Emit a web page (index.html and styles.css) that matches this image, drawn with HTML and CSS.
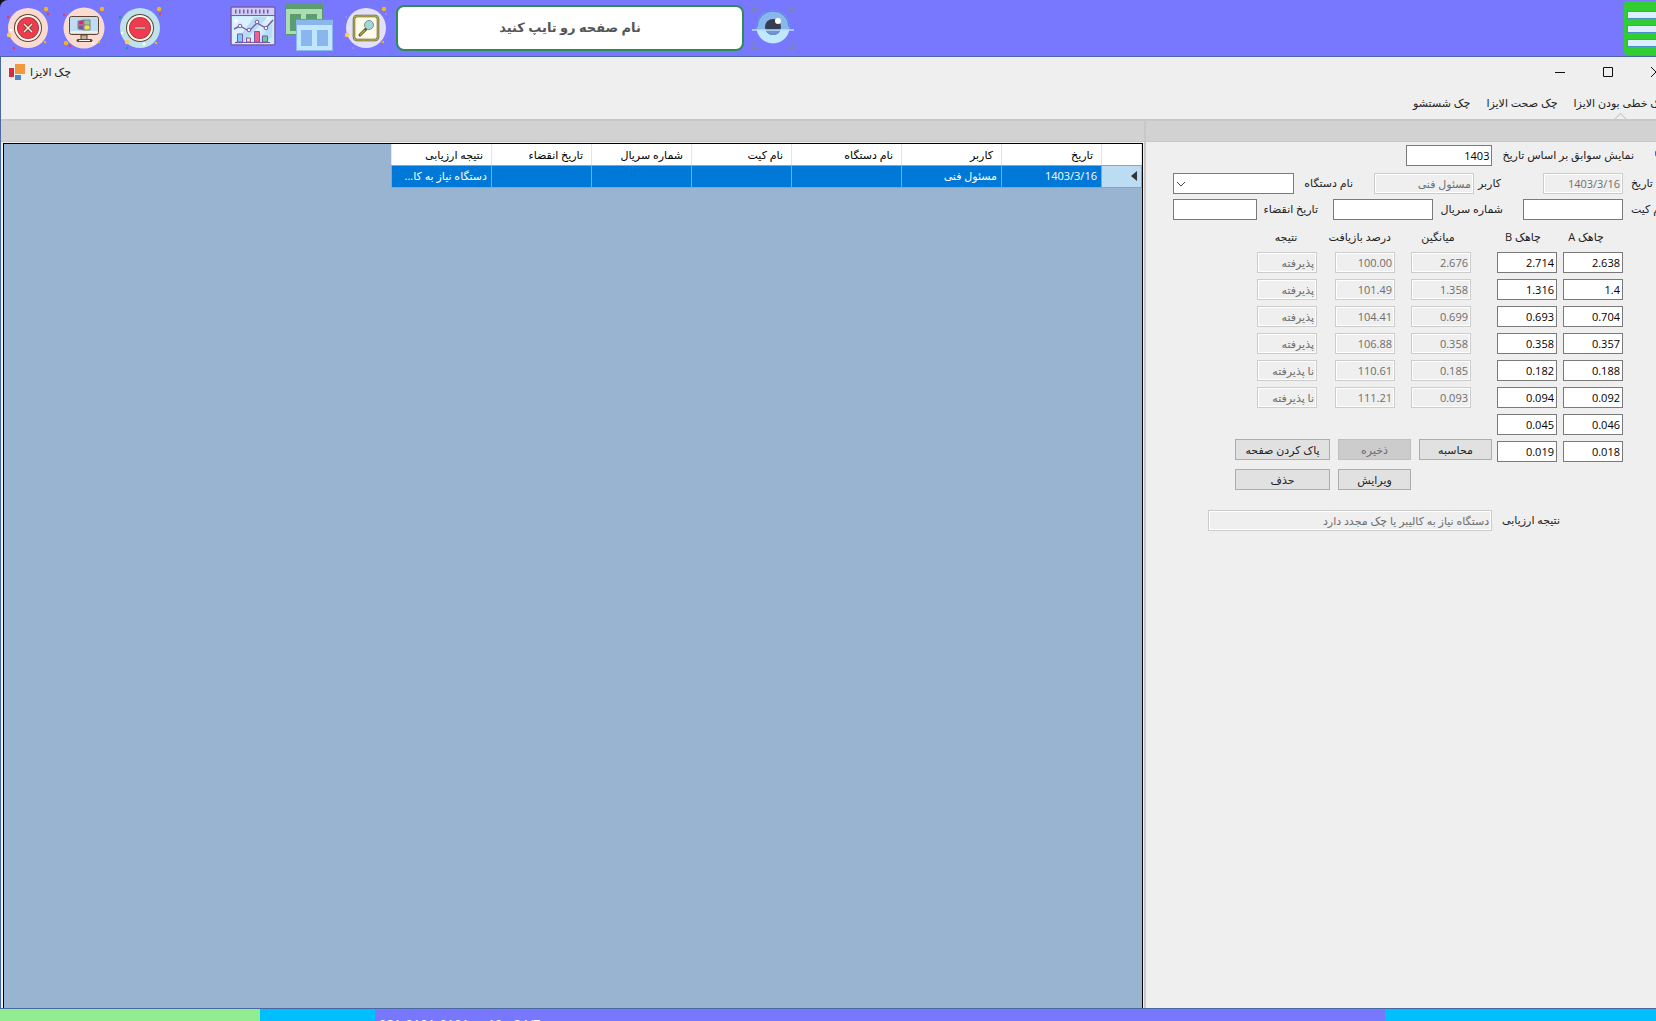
FILE: index.html
```html
<!DOCTYPE html>
<html lang="fa">
<head>
<meta charset="utf-8">
<title>چک الایزا</title>
<link rel="stylesheet" href="styles.css">
</head>
<body>
<div class="shell">
  <header class="topbar">
    <nav class="tools">
      <button class="tool" aria-label="خروج">
        <svg viewBox="0 0 44 44" width="44" height="44"><circle cx="22" cy="22" r="20" fill="#fadbd2"/><circle cx="22" cy="22" r="14" fill="#5c4334"/><circle cx="22" cy="22" r="13" fill="#fff7ea"/><circle cx="22" cy="22" r="11" fill="#8a3a40"/><circle cx="22" cy="22" r="10.400" fill="#f03a50"/><path d="M18 18l8 8M26 18l-8 8" stroke="#5c4334" stroke-width="3"/><path d="M18 18l8 8M26 18l-8 8" stroke="#fff0dc" stroke-width="1.500"/><circle cx="40" cy="3" r="2.200" fill="#f5b417"/><circle cx="3" cy="29" r="2.200" fill="#ffca4e"/><circle cx="39" cy="36" r="1.200" fill="#f5b417"/><circle cx="42" cy="8" r="1.200" fill="#f03a50"/><circle cx="2" cy="11" r="1.200" fill="#f03a50"/><circle cx="8" cy="42" r="1.200" fill="#f03a50"/><circle cx="5" cy="24" r="1.300" fill="#fff"/></svg>
      </button>
      <button class="tool" aria-label="دسکتاپ">
        <svg viewBox="0 0 44 44" width="44" height="44"><circle cx="22" cy="22" r="20.500" fill="#fadbd2"/><rect x="7.500" y="10.500" width="29" height="18" rx="2" fill="#bfdcf3" stroke="#5c4334"/><path d="M8 26h28" stroke="#fff7ea" stroke-width="1.500"/><path d="M19 29h6v5h-6z" fill="#bfb49f" stroke="#5c4334"/><path d="M16 34.500h13" stroke="#5c4334" stroke-width="3" stroke-linecap="round"/><path d="M17 34.500h11" stroke="#fff7ea"/><path d="M16.500 15.500l5-1v4h-5z" fill="#e4217e"/><path d="M22.500 14.500h5v4h-5z" fill="#8dc987"/><path d="M16.500 19.500h5v4l-5-1z" fill="#7554a3"/><path d="M22.500 19.500h5v4h-5z" fill="#efe345"/><path d="M16 15l6-1h6v10h-6l-6-1zM22 14v10M16 19h12" fill="none" stroke="#5c4334" stroke-width=".6"/><circle cx="40" cy="3" r="2.200" fill="#f5b417"/><circle cx="4" cy="37" r="2.200" fill="#f5b417"/><circle cx="2" cy="9" r="1.200" fill="#f03a50"/><circle cx="8" cy="40" r="1.200" fill="#f03a50"/><circle cx="31" cy="37" r="1.600" fill="#fff"/><circle cx="37" cy="36" r="1.200" fill="#f5b417"/></svg>
      </button>
      <button class="tool" aria-label="کوچک کردن">
        <svg viewBox="0 0 44 44" width="44" height="44"><circle cx="22" cy="22" r="20" fill="#bfe3e8"/><circle cx="22" cy="22" r="14" fill="#5c4334"/><circle cx="22" cy="22" r="13" fill="#fff7ea"/><circle cx="22" cy="22" r="11" fill="#8a3a40"/><circle cx="22" cy="22" r="10.400" fill="#f03a50"/><path d="M17 22h10" stroke="#8a5a4a" stroke-width="2.500"/><path d="M17 22h10" stroke="#cbbfa8" stroke-width="1.500"/><circle cx="41" cy="3" r="2.200" fill="#f5b417"/><circle cx="9" cy="36" r="2.200" fill="#ffca4e"/><circle cx="38" cy="37" r="1.200" fill="#f5b417"/><circle cx="42" cy="8" r="1.200" fill="#f03a50"/><circle cx="2" cy="11" r="1.200" fill="#0ea08c"/><circle cx="9" cy="42" r="1.200" fill="#0ea08c"/><circle cx="26" cy="38" r="1.600" fill="#fff"/><circle cx="4" cy="27" r="1.300" fill="#fff"/></svg>
      </button>
    </nav>
    <nav class="pages">
      <button class="tool" aria-label="نمودار">
        <svg viewBox="0 0 46 44" width="46" height="44"><rect x="1" y="1" width="44" height="38" rx="1.500" fill="#cbe9fb" stroke="#7a5aa6" stroke-width="1.500"/><path d="M2 11h42L20 38H2z" fill="#d9f0ff"/><path d="M24 11h14L12 38H4zM42 17v14l-8 7h-8z" fill="#b7dcf5"/><rect x="2" y="2" width="42" height="7" fill="#cfcdf5"/><path d="M5 5.500h36" stroke="#7a5aa6" stroke-width="4" stroke-dasharray="1.500 2.500"/><path d="M1 9.500h44M5 36.500h35" stroke="#7a5aa6"/><path d="M4 23l6-3 9 5 8-8 9 5 7-8" fill="none" stroke="#7a5aa6" stroke-width="1.400"/><g fill="#eef7ff" stroke="#7a5aa6"><circle cx="10" cy="20" r="1.800"/><circle cx="19" cy="24" r="1.800"/><circle cx="27" cy="16" r="1.800"/><circle cx="36" cy="22" r="1.800"/></g><g stroke="#7a5aa6"><path d="M7.500 36v-8h5v8z" fill="#7fc8fa"/><path d="M16.500 36v-4h4v4z" fill="#ffe28b"/><path d="M24.500 36V25.500h5V36z" fill="#f26091"/><path d="M32.500 36v-6h5v6z" fill="#69c9a4"/></g><path d="M6 12l.8 2.200 2.200.8-2.200.8L6 18l-.8-2.200L3 15l2.200-.8zM38 10l.5 2 2 .5-2 .5-.5 2-.5-2-2-.5 2-.5z" fill="#fff"/></svg>
      </button>
      <button class="tool" aria-label="پنجره‌ها">
        <svg viewBox="1 0 48 50" width="48" height="50"><path d="M.5.500h37v31H.500z" fill="#acdcb0" stroke="#4f9c6c"/><path d="M0 0h38v6H0z" fill="#5b9d70"/><path d="M5 11h11v17H5zM21 11h11v17H21z" fill="#5b9d70"/><path d="M11.500 16.500h36v31h-36z" fill="#c1e6ff" stroke="#8ab6ee"/><path d="M11 16h37v6H11z" fill="#8ab6ee"/><path d="M11 16h37v1H11z" fill="#6a93d8"/><path d="M16 27h11v16H16zM32 27h11v16H32z" fill="#8ab6ee"/></svg>
      </button>
      <button class="tool" aria-label="جستجو">
        <svg viewBox="0 0 44 44" width="44" height="44"><circle cx="22" cy="22" r="20" fill="#e2e1f7"/><rect x="10" y="10" width="24" height="24" rx="3" fill="#fffbea" stroke="#53502e" stroke-width="2.500"/><rect x="10" y="10" width="24" height="24" rx="3" fill="none" stroke="#b3ae4f" stroke-width="1.400"/><path d="M16 29l6-6" stroke="#53502e" stroke-width="3" stroke-linecap="round"/><path d="M16 29l5-5" stroke="#b3ae4f" stroke-width="1.500"/><circle cx="25" cy="19" r="4.500" fill="#9fd8dc" stroke="#7e908c"/><circle cx="40" cy="3" r="2.200" fill="#f5b417"/><circle cx="3" cy="29" r="2.200" fill="#ffca4e"/><circle cx="39" cy="36" r="1.200" fill="#f5b417"/><circle cx="42" cy="8" r="1" fill="#9a96d8"/><circle cx="2" cy="11" r="1" fill="#9a96d8"/><circle cx="9" cy="42" r="1" fill="#9a96d8"/></svg>
      </button>
    </nav>
    <input class="page-search" dir="rtl" type="text" aria-label="نام صفحه" placeholder="نام صفحه رو تایپ کنید">
    <button class="tool" aria-label="نمایش">
      <svg viewBox="0 0 42 42" width="42" height="42"><path d="M1 7V1h6M35 1h6v6M41 35v6h-6M7 41H1v-6" fill="none" stroke="#7885b8" stroke-width="2"/><circle cx="21" cy="20" r="16.500" fill="#8ab6ee"/><path d="M4.800 23A16.500 16.500 0 0 0 37.200 23z" fill="#c1e8ff"/><path d="M5 20a16 16 0 0 1 32 0" fill="none" stroke="#4f83c6"/><circle cx="21" cy="20" r="8" fill="#343e50"/><path d="M13.600 23a8 8 0 0 0 14.800 0z" fill="#6f93cf"/><circle cx="26" cy="14" r="3" fill="#fff"/><path d="M0 23h42" stroke="#b9e2ff" stroke-width="1.500"/></svg>
    </button>
    <button class="menu-button" aria-label="منو"><span></span><span></span><span></span></button>
  </header>

  <main class="window">
    <div class="titlebar">
      <svg viewBox="0 0 16 16" width="16" height="16"><path d="M6 0h10v10H6z" fill="#f2993f"/><path d="M0 4h5v9H0z" fill="#d03040"/><path d="M6 11h6v5H6z" fill="#4a88c8"/></svg>
      <h1 dir="rtl">چک الایزا</h1>
      <div class="caption">
        <button aria-label="کمینه"><svg viewBox="0 0 10 10" width="10" height="10"><path d="M0 5.500h10" stroke="#111"/></svg></button>
        <button aria-label="بیشینه"><svg viewBox="0 0 10 10" width="10" height="10"><path d="M.5.500h9v9h-9z" fill="none" stroke="#111"/></svg></button>
        <button aria-label="بستن"><svg viewBox="0 0 10 10" width="10" height="10"><path d="M0 0l10 10M10 0L0 10" stroke="#111"/></svg></button>
      </div>
    </div>
    <nav class="tabs" dir="rtl">
      <a class="current" href="#linear">چک خطی بودن الایزا</a>
      <a href="#accuracy">چک صحت الایزا</a>
      <a href="#wash">چک شستشو</a>
    </nav>
    <div class="split">
      <section class="records">
        <div class="band"></div>
        <div class="grid" dir="rtl">
          <table>
            <colgroup><col class="c-mark"><col class="c-std"><col class="c-std"><col class="c-device"><col class="c-std"><col class="c-std"><col class="c-std"><col class="c-std"></colgroup>
            <thead><tr><th></th><th>تاریخ</th><th>کاربر</th><th>نام دستگاه</th><th>نام کیت</th><th>شماره سریال</th><th>تاریخ انقضاء</th><th>نتیجه ارزیابی</th></tr></thead>
            <tbody><tr><th><svg viewBox="0 0 6 10" width="6" height="10"><path d="M6 0v10L0 5z" fill="#333"/></svg></th><td>1403/3/16</td><td>مسئول فنی</td><td></td><td></td><td></td><td></td><td>دستگاه نیاز به کا...</td></tr></tbody>
          </table>
        </div>
      </section>
      <section class="entry">
        <div class="band"></div>
        <form class="form" dir="rtl">
          <div class="line history">
            <input class="by-date" type="radio" aria-label="بر اساس تاریخ">
            <label for="year">نمایش سوابق بر اساس تاریخ</label>
            <input class="w-year" id="year" type="text" value="1403">
          </div>
          <div class="line">
            <label class="l-first" for="date">تاریخ</label>
            <input class="w-date" id="date" type="text" value="1403/3/16" disabled>
            <label class="l-user" for="user">کاربر</label>
            <input class="w-mid" id="user" type="text" value="مسئول فنی" disabled>
            <label class="l-device" for="device">نام دستگاه</label>
            <span class="select"><select id="device"><option></option></select><svg viewBox="0 0 10 6" width="10" height="6"><path d="M1 1l4 4 4-4" fill="none" stroke="#444"/></svg></span>
          </div>
          <div class="line">
            <label class="l-first" for="kit">نام کیت</label>
            <input class="w-mid" id="kit" type="text">
            <label class="l-serial" for="serial">شماره سریال</label>
            <input class="w-mid" id="serial" type="text">
            <label class="l-expiry" for="expiry">تاریخ انقضاء</label>
            <input class="w-expiry" id="expiry" type="text">
          </div>
          <div class="measure">
            <table class="wells">
              <thead><tr><th>چاهک A</th><th>چاهک B</th></tr></thead>
              <tbody>
                <tr><td><input aria-label="چاهک A 1" value="2.638"></td><td><input aria-label="چاهک B 1" value="2.714"></td></tr>
                <tr><td><input aria-label="چاهک A 2" value="1.4"></td><td><input aria-label="چاهک B 2" value="1.316"></td></tr>
                <tr><td><input aria-label="چاهک A 3" value="0.704"></td><td><input aria-label="چاهک B 3" value="0.693"></td></tr>
                <tr><td><input aria-label="چاهک A 4" value="0.357"></td><td><input aria-label="چاهک B 4" value="0.358"></td></tr>
                <tr><td><input aria-label="چاهک A 5" value="0.188"></td><td><input aria-label="چاهک B 5" value="0.182"></td></tr>
                <tr><td><input aria-label="چاهک A 6" value="0.092"></td><td><input aria-label="چاهک B 6" value="0.094"></td></tr>
                <tr><td><input aria-label="چاهک A 7" value="0.046"></td><td><input aria-label="چاهک B 7" value="0.045"></td></tr>
                <tr><td><input aria-label="چاهک A 8" value="0.018"></td><td><input aria-label="چاهک B 8" value="0.019"></td></tr>
              </tbody>
            </table>
            <div class="computed">
              <table class="results">
                <colgroup><col class="c-mean"><col class="c-percent"><col class="c-result"></colgroup>
                <thead><tr><th>میانگین</th><th>درصد بازیافت</th><th>نتیجه</th></tr></thead>
                <tbody>
                  <tr><td><input aria-label="میانگین 1" value="2.676" disabled></td><td><input aria-label="درصد 1" value="100.00" disabled></td><td><input aria-label="نتیجه 1" value="پذیرفته" disabled></td></tr>
                  <tr><td><input aria-label="میانگین 2" value="1.358" disabled></td><td><input aria-label="درصد 2" value="101.49" disabled></td><td><input aria-label="نتیجه 2" value="پذیرفته" disabled></td></tr>
                  <tr><td><input aria-label="میانگین 3" value="0.699" disabled></td><td><input aria-label="درصد 3" value="104.41" disabled></td><td><input aria-label="نتیجه 3" value="پذیرفته" disabled></td></tr>
                  <tr><td><input aria-label="میانگین 4" value="0.358" disabled></td><td><input aria-label="درصد 4" value="106.88" disabled></td><td><input aria-label="نتیجه 4" value="پذیرفته" disabled></td></tr>
                  <tr><td><input aria-label="میانگین 5" value="0.185" disabled></td><td><input aria-label="درصد 5" value="110.61" disabled></td><td><input aria-label="نتیجه 5" value="نا پذیرفته" disabled></td></tr>
                  <tr><td><input aria-label="میانگین 6" value="0.093" disabled></td><td><input aria-label="درصد 6" value="111.21" disabled></td><td><input aria-label="نتیجه 6" value="نا پذیرفته" disabled></td></tr>
                </tbody>
              </table>
              <div class="actions">
                <button type="button">محاسبه</button>
                <button type="button" disabled>ذخیره</button>
                <button type="button">پاک کردن صفحه</button>
                <button class="edit" type="button">ویرایش</button>
                <button type="button">حذف</button>
              </div>
            </div>
          </div>
          <div class="line verdict">
            <label for="verdict">نتیجه ارزیابی</label>
            <input class="w-verdict" id="verdict" type="text" value="دستگاه نیاز به کالیبر یا چک مجدد دارد" disabled>
          </div>
        </form>
      </section>
    </div>
  </main>

  <footer class="status">
    <span class="s-green"></span><span class="s-blue"></span><span class="s-text">021-9101-9101 - - 10 - 24/7</span><span class="s-end"></span>
  </footer>
</div>
</body>
</html>
```
FILE: styles.css
```css
* { box-sizing: border-box; }
html { background: #111; }
body {
  margin: 0;
  height: 100vh;
  overflow: hidden;
  font: 11px/16px "Open Sans", "DejaVu Sans", sans-serif;
  color: #222;
}
button, input, select { font: inherit; color: inherit; margin: 0; }

/* The desktop is wider and taller than the viewport and is clipped by it. */
.shell {
  display: flex;
  flex-direction: column;
  width: calc(100% + 44px);
  height: calc(100vh + 16px);
}

.topbar {
  display: flex;
  align-items: center;
  flex: none;
  height: 56px;
  padding-left: 6px;
  background: #7878ff;
  border-top-left-radius: 8px;
}
.tools { display: flex; gap: 12px; }
.pages { display: flex; align-items: center; gap: 10px; margin-left: 68px; }
.tool { display: block; padding: 0; border: 0; background: none; }
.tool svg { display: block; overflow: visible; }
.page-search {
  width: 348px;
  height: 46px;
  margin: 0 8px;
  padding: 0 2px 2px;
  border: 2px solid #2e8b57;
  border-radius: 8px;
  background: #fff;
  text-align: center;
  font-size: 13px;
  font-weight: bold;
}
.page-search::placeholder { color: #555; opacity: 1; }
.menu-button {
  display: flex;
  flex-direction: column;
  justify-content: center;
  gap: 6px;
  width: 76px;
  height: 54px;
  margin-left: auto;
  padding: 2px 3px 0;
  border: 0;
  border-radius: 4px;
  background: #32cd32;
}
.menu-button span { height: 8px; border: 1px solid #4a90c8; background: #ddeeff; }

.window {
  display: flex;
  flex-direction: column;
  flex: 1;
  min-height: 0;
  background: #efefef;
  border: 1px solid #4a69a0;
}
.titlebar { display: flex; align-items: center; height: 30px; padding-left: 8px; gap: 5px; }
.titlebar h1 { margin: 0; font-size: 11px; font-weight: normal; }
.caption { display: flex; margin-left: auto; padding-right: 19px; }
.caption button { display: flex; align-items: center; justify-content: center; width: 48px; height: 30px; padding: 0; border: 0; background: none; }

.tabs { display: flex; gap: 16px; height: 32px; padding: 8px 32px 0 0; }
.tabs a { position: relative; color: #222; text-decoration: none; white-space: nowrap; }
.current::after {
  content: "";
  position: absolute;
  top: 20px;
  left: 41px;
  width: 10px;
  height: 10px;
  border: solid #c8c8c8;
  border-width: 1px 0 0 1px;
  background: #efefef;
  transform: rotate(45deg);
}

.split { position: relative; display: flex; flex: 1; min-height: 0; }
.records { display: flex; flex-direction: column; flex: 1; min-width: 0; }
.entry { flex: none; width: 555px; border-left: 2px solid #c8c8c8; }
.band { flex: none; height: 23px; background: #d2d2d2; border-top: 2px solid #c8c8c8; border-bottom: 1px solid #c8c8c8; }
.grid { flex: 1; margin: 1px 1px 0 2px; border: 1px solid #000; border-bottom: 0; background: #99b4d1; }
.grid table { table-layout: fixed; width: 750px; border-collapse: collapse; }
.c-mark { width: 40px; }
.c-std { width: 100px; }
.c-device { width: 110px; }
.grid th, .grid td { height: 21px; padding: 2px 4px 0; border: 1px solid #a0a0a0; border-top: 0; font-weight: normal; text-align: right; white-space: nowrap; }
.grid thead th { padding-right: 8px; background: #fff; color: #000; border-color: #e5e5e5; border-bottom-color: #a0a0a0; }
.grid tbody td { height: 22px; padding-top: 0; background: #0078d7; color: #fff; }
.grid tbody th { padding-top: 0; background: #bcdcf4; }
.grid tbody svg { display: block; }

.form { padding: 3px 76px 0 0; }
.line { display: flex; align-items: center; height: 26px; }
.line label { flex: none; white-space: nowrap; }
.form input, .form select {
  height: 21px;
  padding: 0 2px;
  border: 1px solid #7a7a7a;
  border-radius: 0;
  background: #fff;
  color: #000;
}
.form input:disabled {
  border-color: #ccc;
  background: #efefef;
  box-shadow: inset 0 0 0 1px #fff;
  color: #6d6d6d;
}
.form .by-date { flex: none; width: 13px; height: 13px; appearance: none; border-color: #2040a0; border-radius: 50%; }
.line.history { height: 25px; margin-right: -45px; gap: 10px; align-items: flex-start; }
.history label, .history .by-date { margin-top: 2px; }
.history .by-date { margin-left: 11px; }
.w-year { width: 86px; }
.w-date { width: 80px; }
.w-mid { width: 100px; }
.w-expiry { width: 84px; }
.w-verdict { width: 284px; }
.l-first { width: 36px; margin: 0 -44px 0 8px; text-align: left; }
.l-user { width: 69px; padding-right: 42px; }
.l-device { width: 80px; padding-right: 21px; }
.l-serial { width: 90px; padding-right: 20px; }
.l-expiry { width: 76px; padding-right: 15px; }
.select { position: relative; }
.select select { display: block; width: 121px; appearance: none; }
.select svg { position: absolute; left: 3px; top: 8px; }

.measure { display: flex; align-items: flex-start; gap: 5px; margin-top: 6px; }
.measure table { border-collapse: separate; border-spacing: 0; }
.measure th { height: 24px; padding: 0 0 6px; font-weight: normal; text-align: center; white-space: nowrap; }
.measure td { height: 27px; padding: 0; vertical-align: top; }
.measure input { display: block; width: 60px; }
.measure .wells th { padding-right: 14px; }
.wells td + td { padding-right: 6px; }
.results { table-layout: fixed; width: 214px; margin-right: 21px; }
.c-mean { width: 60px; }
.c-percent { width: 76px; }
.c-result { width: 78px; }
.measure .results th { padding-right: 6px; }
.measure .results th + th { padding-right: 20px; }
.results td + td { padding-right: 16px; }
.results td + td + td { padding-right: 18px; }
.actions { display: grid; grid-template-columns: 73px 73px 95px; gap: 9px 8px; margin-top: 25px; }
.actions button { height: 21px; padding: 0; border: 1px solid #adadad; background: #e1e1e1; line-height: 16px; white-space: nowrap; }
.actions button:disabled { border-color: #bfbfbf; background: #ccc; color: #6d6d6d; }
.edit { grid-column: 2; }
.verdict { margin: 17px 63px 0 0; gap: 10px; }

.status { display: flex; flex: none; height: 28px; color: #fff; }
.s-green { width: 260px; background: #90ee90; }
.s-blue { width: 115px; background: #00bfff; }
.s-text { flex: 1; padding: 5px 4px 0; background: #7878ff; font-size: 13px; line-height: 20px; }
.s-end { width: 315px; background: #00bfff; }
```
